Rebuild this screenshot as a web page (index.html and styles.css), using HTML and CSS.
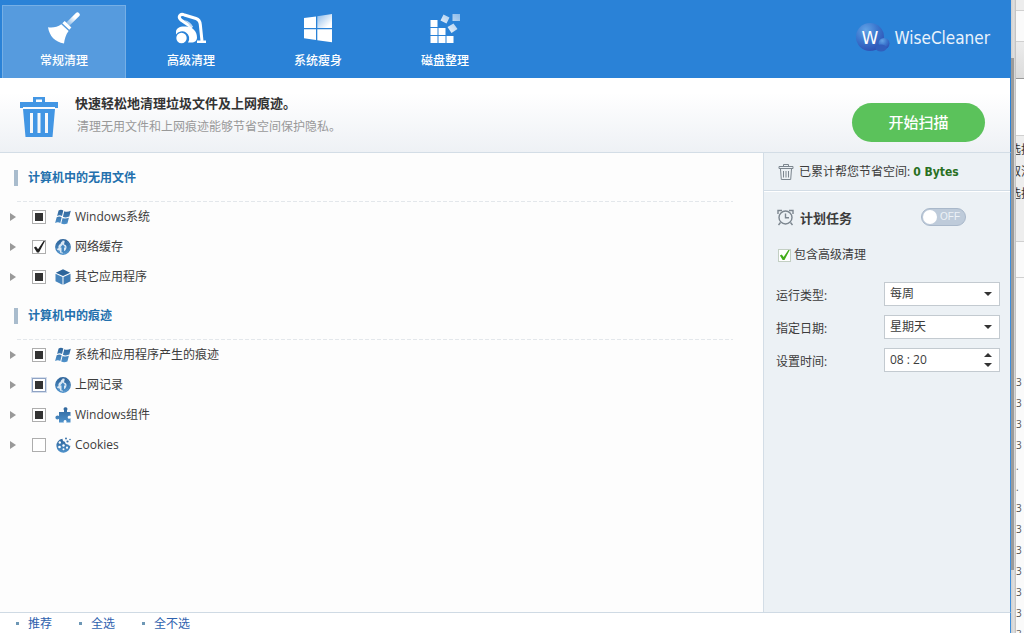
FILE: index.html
```html
<!DOCTYPE html>
<html lang="zh-CN">
<head>
<meta charset="utf-8">
<title>WiseCleaner</title>
<link rel="stylesheet" href="styles.css">
</head>
<body>
<svg class="defs" width="0" height="0" aria-hidden="true">
  <defs>
    <linearGradient id="steel" x1="0" y1="0" x2="0" y2="1"><stop offset="0" stop-color="#2f659b"/><stop offset="1" stop-color="#4f92cb"/></linearGradient>
    <linearGradient id="fade" x1="0" y1="1" x2="1" y2="0"><stop offset="0" stop-color="#fff"/><stop offset="1" stop-color="#8bbae9"/></linearGradient>
    <linearGradient id="pane" x1="0" y1="0" x2="1" y2="1"><stop offset="0" stop-color="#8bbae9"/><stop offset=".8" stop-color="#fff"/></linearGradient>
    <linearGradient id="handle" x1="1" y1="0" x2="0" y2="1"><stop offset=".3" stop-color="#fff"/><stop offset="1" stop-color="#8ebce8"/></linearGradient>
    <radialGradient id="orb" cx=".35" cy=".25" r=".8"><stop offset="0" stop-color="#63a3e6"/><stop offset=".5" stop-color="#3c78cf"/><stop offset="1" stop-color="#2d50b3"/></radialGradient>
  </defs>
  <symbol id="flag" viewBox="0 0 16 16">
    <path fill="url(#steel)" d="M3.600 1.600C5.200.5 6.800.6 8.300 1.500L7 7C5.500 6.100 3.800 6.100 2.100 7zM9.300 2.200c1.900.9 3.900.8 6.500-.4l-1.500 5.800c-2.300 1-4.400 1.100-6.400.1zM1.700 8.200c1.800-.9 3.500-.9 5 0l-1.400 5.700c-1.600-.9-3.300-.9-5.200 0zM7.600 8.900c1.900.9 4 .8 6.300-.2l-1.500 5.800c-2.200 1-4.200 1-6.200.1z"/>
  </symbol>
  <symbol id="globe" viewBox="0 0 16 16">
    <circle cx="8" cy="8" r="7.200" fill="#dbe8f4" stroke="url(#steel)" stroke-width="1.400"/>
    <path fill="url(#steel)" d="M7 1C2.500 1.300.3 5.500 1 9.500c1 .5 2 .3 2.500-.5C3 7 4 5.500 5.500 5c.2-1.500 1-2.500 2.300-3zM9.500 1.200c3 1 5 3.300 5.500 6.300-.2 4-3 7-7 7.300v-2.500c2-.3 3.200-1.500 3.500-3.800.2-2-1-3-2.500-3 .2-1.500 1-3 .5-4.300z"/>
    <path fill="#4789c2" d="M7.800 5.500l2.700 3H9v5H6.500v-5H5.200zM1.500 11l3 .5 1 3z"/>
  </symbol>
  <symbol id="cube" viewBox="0 0 16 16">
    <path fill="#2d659b" d="M8 .3l7.200 3.400L8 7.100.8 3.700z"/><path fill="#4785bd" d="M.5 4.700l7 3.300v7.700L.5 12.300z"/><path fill="#3e7bb4" d="M15.500 4.700l-7 3.300v7.700l7-3.400z"/>
  </symbol>
  <symbol id="puzzle" viewBox="0 0 16 16">
    <path fill="url(#steel)" d="M9 5V3.200C8 2.200 8.500.2 10.500.2s2.600 2 1.500 3V5h3.500v4.200c-1-.9-2.800-.5-2.800 1s1.800 2 2.800 1.100v4.200h-4.300c.8-1 .2-2.500-1.100-2.500s-2 1.500-1.100 2.500H4v-3.700c-1 1.200-3.600.9-3.600-1.200S3 8 4 9V5z"/>
  </symbol>
  <symbol id="cookie" viewBox="0 0 16 16">
    <path fill="url(#steel)" d="M7.500 1.700c-.1 2 1 3 2.500 3 .1 2 1.500 3 3.200 2.700.4 1 1.200 1.400 2.200 1.300A7 7 0 1 1 7.500 1.700z"/>
    <g fill="#fff"><circle cx="4.800" cy="5.500" r="1.200"/><circle cx="4.500" cy="10" r="1.300"/><circle cx="8.500" cy="8.500" r="1.200"/><circle cx="8.500" cy="12.300" r="1"/><circle cx="12" cy="10.700" r="1.100"/></g>
    <g fill="#3c76ad"><circle cx="11" cy="1.500" r="1"/><circle cx="12.500" cy="4.500" r="1.100"/><circle cx="15" cy="2.500" r=".8"/></g>
  </symbol>
</svg>

<div class="app">
  <header class="topbar">
    <nav class="tabs">
      <button class="tab active" type="button">
        <svg width="32" height="32" viewBox="0 0 32 32"><path d="M20 12L29.500 2.700" stroke="url(#handle)" stroke-width="4.500" stroke-linecap="round"/><path fill="#fff" d="M14.300 11.300l2.400-2.200 6.700 6.400-2.100 2.300zM0 15.200c5 .7 9.500-.3 13.300-3l7.300 6.800c-2.800 3.500-4 8-4.600 12.500C7 30 1.500 24 0 15.200z"/></svg>
        <span>常规清理</span>
      </button>
      <button class="tab" type="button">
        <svg width="32" height="32" viewBox="0 0 32 32"><path d="M17 15.500L6 8C2.500 5 5 1 9.500 3L21 6.500c3 1 4 3 4.300 6L27 29" fill="none" stroke="#fff" stroke-width="3"/><path fill="url(#fade)" d="M9 8c5 1 8 3.500 9 7.500l-3-1C14 12 12 10 9 8z"/><path fill="#fff" d="M1 20c0-4 4-6 10-5.500 7 .5 11 5 11 11 0 3-2 5-6 5h-3a6.500 6.500 0 0 0-12-8zM22 28.500h9V31h-9z"/><circle cx="6.500" cy="26" r="5.200" fill="#fff"/></svg>
        <span>高级清理</span>
      </button>
      <button class="tab" type="button">
        <svg width="32" height="32" viewBox="0 0 32 32"><path fill="#fff" d="M2 6l12-1.600V16H2zM2 17.200h12V28L2 26.300zM15.300 17.200H30v13L15.300 28.200z"/><path fill="url(#pane)" d="M15.300 4.200L30 2v14H15.300z"/></svg>
        <span>系统瘦身</span>
      </button>
      <button class="tab" type="button">
        <svg width="32" height="32" viewBox="0 0 32 32"><path fill="#fff" d="M1.500 8h7v7h-7zM1.500 16h7v7h-7zM9.500 16h7v7h-7zM1.500 24h7v7h-7zM9.500 24h7v7h-7zM17.500 24h7v7h-7z"/><path fill="url(#fade)" d="M14.500 2.500l6 3-3 6-6-3zM23.500 2H31v7h-7.500zM24.500 11.500l4 5.500-6 4-4-6z"/></svg>
        <span>磁盘整理</span>
      </button>
    </nav>
    <div class="brand">
      <svg width="34" height="32" viewBox="0 0 34 32"><circle cx="14" cy="15" r="14" fill="url(#orb)"/><circle cx="28" cy="21.500" r="5.500" fill="url(#orb)"/><ellipse cx="25" cy="26" rx="5.500" ry="3.500" fill="#315fbd"/><text class="orb-letter" x="14" y="22" text-anchor="middle">W</text></svg>
      <span>WiseCleaner</span>
    </div>
  </header>

  <section class="intro">
    <svg width="40" height="40" viewBox="0 0 40 40"><path fill="#4296e4" fill-rule="evenodd" d="M14 0h12v5h13v6h-3V10H4v1H1V5h13zM17 2.500V5h6V2.500zM4 12h32l-2.500 28h-27zM11 16v20h3V16zM18.500 16v20h3V16zM26 16v20h3V16z"/></svg>
    <div class="intro-text">
      <h1>快速轻松地清理垃圾文件及上网痕迹。</h1>
      <p>清理无用文件和上网痕迹能够节省空间保护隐私。</p>
    </div>
    <button class="scan" type="button">开始扫描</button>
  </section>

  <div class="body">
    <main class="lists">
      <section>
        <h2>计算机中的无用文件</h2>
        <ul>
          <li><i class="caret"></i><input class="box partial" type="checkbox" id="c1"><label for="c1"><svg width="16" height="16"><use href="#flag"/></svg>Windows系统</label></li>
          <li><i class="caret"></i><input class="box" type="checkbox" id="c2" checked><label for="c2"><svg width="16" height="16"><use href="#globe"/></svg>网络缓存</label></li>
          <li><i class="caret"></i><input class="box partial" type="checkbox" id="c3"><label for="c3"><svg width="16" height="16"><use href="#cube"/></svg>其它应用程序</label></li>
        </ul>
      </section>
      <section>
        <h2>计算机中的痕迹</h2>
        <ul>
          <li><i class="caret"></i><input class="box partial" type="checkbox" id="c4"><label for="c4"><svg width="16" height="16"><use href="#flag"/></svg>系统和应用程序产生的痕迹</label></li>
          <li><i class="caret"></i><input class="box partial hot" type="checkbox" id="c5"><label for="c5"><svg width="16" height="16"><use href="#globe"/></svg>上网记录</label></li>
          <li><i class="caret"></i><input class="box partial" type="checkbox" id="c6"><label for="c6"><svg width="16" height="16"><use href="#puzzle"/></svg>Windows组件</label></li>
          <li><i class="caret"></i><input class="box" type="checkbox" id="c7"><label for="c7"><svg width="16" height="16"><use href="#cookie"/></svg>Cookies</label></li>
        </ul>
      </section>
    </main>

    <aside class="side">
      <p class="saved">
        <svg width="16" height="16" viewBox="0 0 16 16" fill="none" stroke="#7c868f"><path d="M5.500 2.500v-2h5v2M1 4.500v-2h14v2zM2.500 5l.8 10.500h9.400L13.500 5M5.500 7v6.500M8 7v6.500M10.500 7v6.500"/></svg>
        <span>已累计帮您节省空间: <strong>0 Bytes</strong></span>
      </p>
      <div class="plan">
        <svg width="17" height="17" viewBox="0 0 17 17" fill="none" stroke="#7c868f"><circle cx="8.500" cy="8.500" r="6.500" stroke-width="1.400"/><path d="M8.500 4.500v4.200H12M1 5V1.500h4M12 1.500h4V5M3.500 13.500l-2 2.500M13.500 13.500l2 2.500" stroke-width="1.400"/></svg>
        <h3 id="plan-name">计划任务</h3>
        <button class="switch" type="button" role="switch" aria-checked="false" aria-labelledby="plan-name"><i></i><span>OFF</span></button>
      </div>
      <div class="include"><input class="tick" type="checkbox" id="adv" checked><label for="adv">包含高级清理</label></div>
      <div class="field"><label for="kind">运行类型:</label><div class="control"><select id="kind"><option>每周</option></select><i class="down"></i></div></div>
      <div class="field"><label for="day">指定日期:</label><div class="control"><select id="day"><option>星期天</option></select><i class="down"></i></div></div>
      <div class="field"><label for="time">设置时间:</label><div class="control"><input id="time" type="text" value="08 : 20"><div class="spin"><button class="up" type="button" aria-label="增加"></button><button class="down" type="button" aria-label="减少"></button></div></div></div>
    </aside>
  </div>

  <footer class="links"><a href="#">推荐</a><a href="#">全选</a><a href="#">全不选</a></footer>
</div>

<div class="shadow"></div>
<div class="behind">
  <div class="strip s1"></div><div class="strip s2"></div><div class="strip s3"></div><div class="strip s4"></div>
  <div class="menu"><p>选择</p><p>取消</p><p>选择</p></div>
  <div class="strip s5"></div>
  <div class="rows"><p>3</p><p>3</p><p>3</p><p>3</p><p>.</p><p>.</p><p>3</p><p>3</p><p>3</p><p>3</p><p>3</p><p>3</p><p>3</p></div>
</div>
</body>
</html>
```
FILE: styles.css
```css
* { box-sizing: border-box; }
html, body { height: 100%; }
body {
  margin: 0;
  display: flex;
  overflow: hidden;
  background: #fff;
  color: #3c3c3c;
  font: 12px/18px "Open Sans", "Noto Sans CJK SC", sans-serif;
}
h1, h2, h3, p, ul { margin: 0; padding: 0; }
ul { list-style: none; }
button, input, select { margin: 0; padding: 0; border: 0; font: inherit; color: inherit; }
svg { flex: none; display: block; }
.defs { position: absolute; }

.app { flex: 1; min-width: 0; display: flex; flex-direction: column; }

.topbar {
  flex: none;
  display: flex;
  justify-content: space-between;
  height: 78px;
  padding: 5px 21px 0 2px;
  background: #2a82d7;
}
.tabs { display: flex; gap: 3px; }
.tab {
  display: flex;
  flex-direction: column;
  align-items: center;
  gap: 8px;
  width: 124px;
  padding-top: 6px;
  border: 1px solid transparent;
  border-bottom: 0;
  background: none;
  color: #fff;
  font-weight: 500;
}
.tab.active { background: #569bde; border-color: #76afe5; }
.brand {
  display: flex;
  align-items: center;
  gap: 5px;
  padding-bottom: 8px;
  color: #eaf3fc;
  font: 17px/24px "DejaVu Sans Condensed", "DejaVu Sans", sans-serif;
}
.orb-letter { font: 17px "DejaVu Sans", sans-serif; fill: #fff; }

.intro {
  flex: none;
  display: flex;
  align-items: center;
  height: 75px;
  padding: 4px 25px 0 19px;
  border-right: 1px solid #2a82d7;
  border-bottom: 1px solid #d3dde6;
  background: linear-gradient(#fff 20%, #eef1f5);
}
.intro-text { flex: 1; padding: 0 0 4px 16px; }
.intro h1 { font-size: 13px; line-height: 24px; font-weight: 700; color: #333; }
.intro p { padding-left: 2px; line-height: 24px; color: #999; }
.scan {
  width: 133px;
  height: 39px;
  margin-top: 10px;
  border-radius: 20px;
  background: #5bc25b;
  color: #fff;
  font-size: 15px;
  font-weight: 500;
}

.body { flex: 1; display: flex; min-height: 0; border-right: 1px solid #3d8edc; }
.lists { flex: 1; background: #fdfdfd; }
.lists section { padding-top: 1px; }
.lists h2 {
  display: flex;
  align-items: center;
  height: 48px;
  margin: 0 30px 0 14px;
  font-size: 12px;
  color: #2370ad;
  background: repeating-linear-gradient(90deg, #e3e7eb 0 4px, transparent 4px 6px) 3px bottom / 100% 1px no-repeat;
}
.lists h2::before { content: ""; width: 4px; height: 16px; margin-right: 10px; background: #a9bccd; }
.lists li { display: flex; align-items: center; height: 30px; padding-left: 10px; }
.lists ul { margin-bottom: -1px; }
.lists label { display: flex; align-items: center; gap: 4px; padding-left: 9px; }
.caret { border: solid transparent; border-width: 4px 0 4px 6px; border-left-color: #999; }
.box {
  appearance: none;
  width: 14px;
  height: 14px;
  margin-left: 16px;
  border: 1px solid #adadad;
  background: #fff;
}
.partial { background: linear-gradient(#333, #333) center / 8px 8px no-repeat #fff; }
.hot { border-color: #8fa3c4; box-shadow: 0 0 0 1px #d5deec; }
.box:checked::after, .tick::after {
  content: "";
  display: block;
  width: 12px;
  height: 12px;
  background: #222;
  clip-path: polygon(8% 55%, 25% 45%, 42% 68%, 88% 0, 100% 0, 50% 95%, 33% 95%);
}
.tick { appearance: none; width: 13px; height: 13px; border: 1px solid #c3cfc3; background: #fff; }
.tick::after { width: 11px; height: 11px; background: #43ac1a; }

.side { flex: none; width: 247px; border-left: 1px solid #d3dde6; background: #ecf1f5; }
.saved {
  display: flex;
  align-items: center;
  gap: 5px;
  height: 38px;
  padding-left: 14px;
  border-bottom: 1px solid #d3dde6;
  box-shadow: 0 1px #fff;
}
.saved strong { font: bold 12px/18px "DejaVu Sans Condensed", "DejaVu Sans", sans-serif; color: #29701f; }
.plan { display: flex; align-items: center; height: 52px; padding: 0 44px 0 13px; }
.plan h3 { flex: 1; padding: 2px 0 0 6px; font-size: 13px; }
.switch {
  display: flex;
  align-items: center;
  justify-content: space-between;
  width: 45px;
  height: 18px;
  padding: 0 5px 0 1px;
  border: 1px solid #a9b8ca;
  border-radius: 9px;
  background: #becbda;
  color: #edf2f7;
  font: 10px/16px "Liberation Sans", sans-serif;
}
.switch i { width: 14px; height: 14px; border-radius: 50%; background: #fff; }
.include { display: flex; align-items: center; gap: 3px; height: 24px; padding-left: 14px; }
.field { display: flex; align-items: center; justify-content: space-between; height: 24px; margin: 0 10px 9px 12px; }
.include + .field { margin-top: 15px; }
.field label { padding-top: 3px; }
.control { display: flex; align-items: center; width: 116px; height: 24px; padding: 0 7px 0 5px; border: 1px solid #c3cad0; background: #fff; }
.control select, .control input { appearance: none; flex: 1; min-width: 0; background: none; outline: 0; }
.down, .up { width: 8px; height: 4px; padding: 0; background: #333; clip-path: polygon(0 0, 100% 0, 50% 100%); }
.up { clip-path: polygon(50% 0, 100% 100%, 0 100%); }
.spin { display: flex; flex-direction: column; gap: 6px; }

.links {
  flex: none;
  display: flex;
  gap: 27px;
  height: 21px;
  padding-left: 16px;
  border-top: 1px solid #cfdae4;
  border-right: 1px solid #3d8edc;
  background: #fff;
  line-height: 21px;
}
.links a { display: flex; align-items: center; gap: 9px; color: #2f62ae; text-decoration: none; }
.links a::before { content: ""; width: 3px; height: 3px; background: #6d97b5; }

.shadow {
  flex: none;
  width: 5px;
  background:
    linear-gradient(90deg, #9b9b9b 60%, transparent 60%) 0 58px / 100% 512px no-repeat,
    linear-gradient(90deg, #d0d0d0, #e0e0e0 60%, #c4c4c4 90%);
}
.behind { flex: none; width: 8px; overflow: hidden; display: flex; flex-direction: column; background: #fafafa; color: #555; }
.behind p { width: 24px; }
.strip { flex: none; border-bottom: 1px solid #d0d0d0; }
.s1 { height: 11px; background: #ededed; }
.s2 { height: 31px; }
.s3 { height: 37px; background: linear-gradient(#ececec, #dcdcdc); border-color: #999; }
.s4 { height: 57px; background: #fff; }
.menu { flex: none; height: 106px; padding-top: 3px; border-bottom: 1px solid #d0d0d0; background: #eee; color: #333; }
.menu p { line-height: 22px; text-indent: -7px; }
.s5 { height: 36px; }
.rows { padding-top: 94px; font-size: 10px; }
.rows p { width: 8px; line-height: 21px; }
```
